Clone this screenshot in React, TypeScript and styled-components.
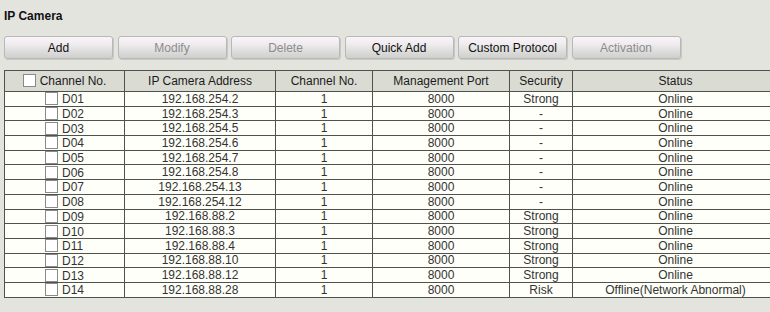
import styled, { createGlobalStyle } from 'styled-components'

const GlobalStyle = createGlobalStyle`
  html, body {
    margin: 0;
    padding: 0;
    background: #e3e4de;
    overflow: hidden;
  }
  body {
    font-family: 'Liberation Sans', Arial, sans-serif;
    font-size: 12px;
  }
`

const Page = styled.div`
  width: 770px;
  height: 312px;
  padding: 9px 0 0 4px;
  box-sizing: border-box;
`

const Title = styled.div`
  font-weight: 700;
  font-size: 12px;
  line-height: 14px;
  color: #111;
`

const Toolbar = styled.div`
  display: flex;
  gap: 4.5px;
  margin-top: 13px;
`

const Button = styled.button<{ disabled?: boolean }>`
  width: 109px;
  height: 23px;
  padding: 0;
  border: 1px solid #b9b8b9;
  border-radius: 3px;
  background: linear-gradient(#f8f4f8 0%, #efebef 35%, #dcdcda 70%, #cfd0cd 100%);
  box-shadow: 1px 1px 0 #c8c9c4;
  font-family: 'Liberation Sans', Arial, sans-serif;
  font-size: 12px;
  color: ${({ disabled }) => (disabled ? '#8c8c8c' : '#111')};
  cursor: ${({ disabled }) => (disabled ? 'default' : 'pointer')};
`

const Table = styled.table`
  margin-top: 11px;
  width: 768px;
  border-collapse: collapse;
  table-layout: fixed;
  color: #333;
`

const HeadCell = styled.th<{ w: number }>`
  width: ${({ w }) => w}px;
  height: 20px;
  padding: 0;
  background: #dadcd4;
  border: 1px solid #4f524d;
  font-weight: 400;
  color: #1a1a1a;
  text-align: center;
  white-space: nowrap;
`

const Row = styled.tr`
  height: 14.2px;
`

const Cell = styled.td<{ left?: boolean }>`
  padding: 0 0 0 ${({ left }) => (left ? '40px' : '0')};
  background: #fffff9;
  border: 1px solid #4f524d;
  line-height: 12px;
  height: 13.7px;
  text-align: ${({ left }) => (left ? 'left' : 'center')};
  white-space: nowrap;
`

const Check = styled.span`
  display: inline-block;
  width: 11px;
  height: 11px;
  border: 1px solid #8a8a88;
  background: #fff;
  vertical-align: -2px;
  margin-right: 4px;
`

const buttons = [
  { label: 'Add', disabled: false },
  { label: 'Modify', disabled: true },
  { label: 'Delete', disabled: true },
  { label: 'Quick Add', disabled: false },
  { label: 'Custom Protocol', disabled: false },
  { label: 'Activation', disabled: true },
]

const cameras = [
  ['D01', '192.168.254.2', 'Strong', 'Online'],
  ['D02', '192.168.254.3', '-', 'Online'],
  ['D03', '192.168.254.5', '-', 'Online'],
  ['D04', '192.168.254.6', '-', 'Online'],
  ['D05', '192.168.254.7', '-', 'Online'],
  ['D06', '192.168.254.8', '-', 'Online'],
  ['D07', '192.168.254.13', '-', 'Online'],
  ['D08', '192.168.254.12', '-', 'Online'],
  ['D09', '192.168.88.2', 'Strong', 'Online'],
  ['D10', '192.168.88.3', 'Strong', 'Online'],
  ['D11', '192.168.88.4', 'Strong', 'Online'],
  ['D12', '192.168.88.10', 'Strong', 'Online'],
  ['D13', '192.168.88.12', 'Strong', 'Online'],
  ['D14', '192.168.88.28', 'Risk', 'Offline(Network Abnormal)'],
]

export default function App() {
  return (
    <Page>
      <GlobalStyle />
      <Title>IP Camera</Title>
      <Toolbar>
        {buttons.map(b => (
          <Button key={b.label} disabled={b.disabled}>
            {b.label}
          </Button>
        ))}
      </Toolbar>
      <Table>
        <thead>
          <tr>
            <HeadCell w={119}>
              <Check />
              Channel No.
            </HeadCell>
            <HeadCell w={150}>IP Camera Address</HeadCell>
            <HeadCell w={96}>Channel No.</HeadCell>
            <HeadCell w={136}>Management Port</HeadCell>
            <HeadCell w={62}>Security</HeadCell>
            <HeadCell w={205}>Status</HeadCell>
          </tr>
        </thead>
        <tbody>
          {cameras.map(([id, ip, security, status]) => (
            <Row key={id}>
              <Cell left>
                <Check />
                {id}
              </Cell>
              <Cell>{ip}</Cell>
              <Cell>1</Cell>
              <Cell>8000</Cell>
              <Cell>{security}</Cell>
              <Cell>{status}</Cell>
            </Row>
          ))}
        </tbody>
      </Table>
    </Page>
  )
}
